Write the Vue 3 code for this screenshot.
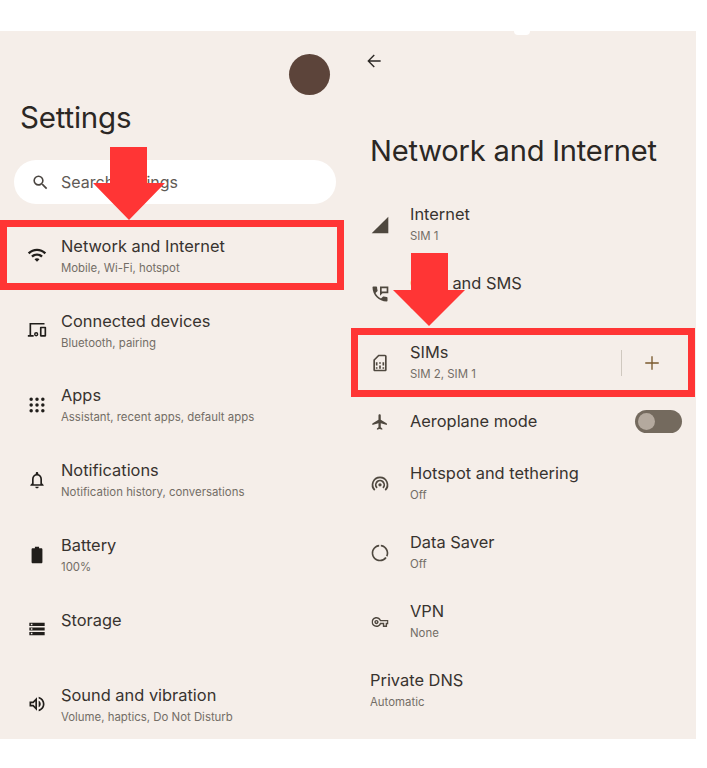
<script setup>
const dots = [5, 12, 19]
  .flatMap((y) => [5, 12, 19].map((x) => `M${x - 2.1} ${y}a2.1 2.1 0 1 0 4.2 0a2.1 2.1 0 1 0-4.2 0z`))
  .join('')

const icons = {
  wifi: 'M1 9l2 2c4.97-4.97 13.03-4.97 18 0l2-2C16.93 2.93 7.08 2.93 1 9zm8 8l3 3 3-3c-1.65-1.66-4.34-1.66-6 0zm-4-4l2 2c2.76-2.76 7.24-2.76 10 0l2-2C15.14 9.14 8.87 9.14 5 13z',
  devices: 'M3 3.5h18v2H5V18h3v2H1v-2h2zM16.5 8h5.5a1 1 0 0 1 1 1v10a1 1 0 0 1-1 1h-5.5a1 1 0 0 1-1-1V9a1 1 0 0 1 1-1zm1 2v8h3.500v-8zM11 14.500a2.600 2.600 0 1 1 0 5.200 2.600 2.600 0 0 1 0-5.200zm0 1.700a.9.9 0 1 0 0 1.800.9.9 0 0 0 0-1.800z',
  apps: dots,
  bell: 'M12 22c1.1 0 2-.9 2-2h-4c0 1.1.9 2 2 2zm6-6v-5c0-3.07-1.63-5.64-4.5-6.32V4c0-.83-.67-1.500-1.500-1.500s-1.500.67-1.500 1.500v.68C7.64 5.36 6 7.92 6 11v5l-2 2v1h16v-1l-2-2zm-2 1H8v-6c0-2.48 1.51-4.5 4-4.5s4 2.02 4 4.5v6z',
  battery: 'M17 4h-2.500V2h-5v2H7C6 4 5.500 4.600 5.500 5.500v15c0 .9.5 1.500 1.500 1.500h10c1 0 1.500-.6 1.500-1.500v-15C18.500 4.600 18 4 17 4z',
  storage: 'M2 20h20v-4H2v4zm2-3h2v2H4v-2zM2 4v4h20V4H2zm4 3H4V5h2v2zm-4 7h20v-4H2v4zm2-3h2v2H4v-2z',
  sound: 'M3 9v6h4l5 5V4L7 9H3zm7-.17v6.34L7.83 13H5v-2h2.83L10 8.83zM16.500 12c0-1.770-1.020-3.290-2.500-4.030v8.050c1.480-.73 2.500-2.250 2.500-4.020zM14 3.230v2.060c2.890.86 5 3.540 5 6.710s-2.110 5.850-5 6.710v2.060c4.010-.91 7-4.490 7-8.770 0-4.280-2.990-7.860-7-8.770z',
  signal: 'M2 22h20V2z',
  calls: 'M20 15.5c-1.25 0-2.45-.2-3.57-.57-.35-.11-.74-.03-1.02.24l-2.2 2.2c-2.83-1.44-5.15-3.75-6.59-6.59l2.2-2.21c.28-.26.36-.65.25-1C8.7 6.45 8.5 5.25 8.5 4c0-.55-.45-1-1-1H4c-.55 0-1 .45-1 1 0 9.39 7.61 17 17 17 .55 0 1-.45 1-1v-3.5c0-.55-.45-1-1-1zM12 3h10v8h-7l-3 3zm2 2v4h6V5z',
  sim: 'M18 2h-8L4 8v12c0 1.1.9 2 2 2h12c1.1 0 2-.9 2-2V4c0-1.1-.9-2-2-2zm0 18H6V8.83L10.83 4H18v16zM7 17h2v2H7zm8 0h2v2h-2zM7 11h2v4H7zm4 4h2v4h-2zm0-4h2v2h-2zm4 0h2v4h-2z',
  plane: 'M21 16v-2l-8-5V3.5c0-.83-.67-1.5-1.5-1.5S10 2.67 10 3.5V9l-8 5v2l8-2.5V19l-2 1.5V22l3.5-1 3.5 1v-1.5L13 19v-5.500l8 2.500z',
  hotspot: 'M12 11a2 2 0 1 0 0 4 2 2 0 0 0 0-4zM12 7a6 6 0 0 0-4.200 10.300l1.400-1.400a4 4 0 1 1 5.600 0l1.400 1.400A6 6 0 0 0 12 7zM12 3A10 10 0 0 0 5 20.100l1.400-1.400a8 8 0 1 1 11.200 0l1.400 1.400A10 10 0 0 0 12 3z',
  saver: 'M13 2.050v2.020c3.950.49 7 3.850 7 7.930 0 1.200-.27 2.330-.74 3.350l1.730 1A9.960 9.960 0 0 0 22 12c0-5.180-3.950-9.450-9-9.950zM12 20a7.990 7.990 0 0 1-1-15.930V2.050C5.950 2.550 2 6.820 2 12c0 5.520 4.480 10 10 10 3.300 0 6.230-1.610 8.050-4.090l-1.730-1A7.980 7.980 0 0 1 12 20z',
  key: 'M22 19h-6v-4h-2.680c-1.140 2.420-3.600 4-6.320 4-3.860 0-7-3.140-7-7s3.140-7 7-7c2.720 0 5.170 1.580 6.320 4H24v6h-2v4zm-4-2h2v-4h2v-2H11.940l-.23-.67C11.010 8.340 9.110 7 7 7c-2.760 0-5 2.240-5 5s2.240 5 5 5c2.110 0 4.010-1.340 4.710-3.330l.23-.67H18v4zM7 15c-1.650 0-3-1.350-3-3s1.350-3 3-3 3 1.350 3 3-1.350 3-3 3zm0-4c-.55 0-1 .45-1 1s.45 1 1 1 1-.45 1-1-.45-1-1-1z',
  search: 'M15.500 14h-.79l-.28-.27A6.470 6.470 0 0 0 16 9.500 6.500 6.500 0 1 0 9.500 16c1.610 0 3.090-.59 4.230-1.570l.27.28v.79l5 4.990L20.490 19l-4.990-5zm-6 0C7.010 14 5 11.990 5 9.500S7.010 5 9.500 5 14 7.010 14 9.500 11.990 14 9.500 14z',
  back: 'M20 11.100H7.200l5.700-5.700L11.700 4.200 4 12l7.700 7.800 1.200-1.200-5.700-5.700H20z',
  plus: 'M11.100 3h1.800v8.100H21v1.800h-8.100V21h-1.800v-8.100H3v-1.800h8.100z'
}

const settings = [
  { icon: 'wifi', title: 'Network and Internet', sub: 'Mobile, Wi-Fi, hotspot' },
  { icon: 'devices', title: 'Connected devices', sub: 'Bluetooth, pairing' },
  { icon: 'apps', title: 'Apps', sub: 'Assistant, recent apps, default apps' },
  { icon: 'bell', title: 'Notifications', sub: 'Notification history, conversations' },
  { icon: 'battery', title: 'Battery', sub: '100%' },
  { icon: 'storage', title: 'Storage', sub: '\u00a0' },
  { icon: 'sound', title: 'Sound and vibration', sub: 'Volume, haptics, Do Not Disturb' }
]

const network = [
  { icon: 'signal', title: 'Internet', sub: 'SIM 1' },
  { icon: 'calls', title: 'Calls and SMS', sub: 'SIM 1' },
  { icon: 'sim', title: 'SIMs', sub: 'SIM 2, SIM 1', add: true },
  { icon: 'plane', title: 'Aeroplane mode', toggle: true },
  { icon: 'hotspot', title: 'Hotspot and tethering', sub: 'Off' },
  { icon: 'saver', title: 'Data Saver', sub: 'Off' },
  { icon: 'key', title: 'VPN', sub: 'None' },
  { title: 'Private DNS', sub: 'Automatic' }
]
</script>

<template>
  <div class="page">
    <div class="screens">
      <section class="panel left">
        <div class="avatar-row"><div class="avatar"></div></div>
        <h1 class="settings-title">Settings</h1>
        <div class="search">
          <svg class="search-icon" viewBox="0 0 24 24"><path :d="icons.search" /></svg>
          <span>Search settings</span>
        </div>
        <div class="row left-row" v-for="item in settings" :key="item.title">
          <svg class="icon" :class="'i-' + item.icon" viewBox="0 0 24 24"><path :d="icons[item.icon]" /></svg>
          <div class="text">
            <div class="title">{{ item.title }}</div>
            <div class="sub">{{ item.sub }}</div>
          </div>
        </div>
      </section>

      <section class="panel right">
        <div class="notch"></div>
        <svg class="back" viewBox="0 0 24 24"><path :d="icons.back" /></svg>
        <h1 class="net-title">Network and Internet</h1>
        <div
          class="row right-row"
          :class="{ short: item.toggle, plain: !item.icon }"
          v-for="item in network"
          :key="item.title"
        >
          <svg v-if="item.icon" class="icon brown" :class="'i-' + item.icon" viewBox="0 0 24 24"><path :d="icons[item.icon]" /></svg>
          <div class="text">
            <div class="title">{{ item.title }}</div>
            <div class="sub" v-if="item.sub">{{ item.sub }}</div>
          </div>
          <div class="add" v-if="item.add">
            <svg class="plus" viewBox="0 0 24 24"><path :d="icons.plus" /></svg>
          </div>
          <div class="toggle" v-if="item.toggle"><div class="knob"></div></div>
        </div>
      </section>
    </div>

    <div class="red-box box-a"></div>
    <div class="red-box box-b"></div>
    <svg class="arrow arrow-a" viewBox="0 0 72 73"><path d="M17 0h37v36h18L36 73 0 36h17z" /></svg>
    <svg class="arrow arrow-b" viewBox="0 0 72 73"><path d="M18 0h37v37h17L36 73 0 37h18z" /></svg>
  </div>
</template>

<style scoped>
.page {
  position: relative;
  width: 707px;
  height: 768px;
  background: #fff;
  font-family: Inter, "Liberation Sans", sans-serif;
  overflow: hidden;
}
.screens {
  display: flex;
  width: 696px;
  padding-top: 31px;
}
.panel {
  height: 708px;
  background: #f5eee9;
  box-sizing: border-box;
}
.left {
  width: 340px;
  flex: none;
}
.right {
  position: relative;
  flex: 1;
}
.avatar-row {
  display: flex;
  justify-content: flex-end;
  padding: 23px 10px 0 0;
}
.avatar {
  width: 41px;
  height: 41px;
  border-radius: 50%;
  background: #5c443a;
}
h1 {
  margin: 0;
  font-weight: 400;
  color: #2b2724;
}
.settings-title {
  margin: 4px 0 0 20px;
  font-size: 29.5px;
  line-height: 36px;
  letter-spacing: -0.2px;
}
.search {
  display: flex;
  align-items: center;
  width: 322px;
  height: 44px;
  margin: 25px 0 14px 14px;
  background: #fff;
  border-radius: 22px;
  color: #5f5a55;
  font-size: 16px;
}
.search-icon {
  width: 19px;
  height: 19px;
  margin: 0 11px 0 17px;
  fill: #4a4540;
}
.row {
  display: flex;
  align-items: center;
  box-sizing: border-box;
}
.left-row {
  height: 74.8px;
}
.left-row .text {
  padding-top: 2px;
}
.icon {
  flex: none;
  width: 20px;
  height: 20px;
  fill: #211e1b;
}
.i-key {
  transform: scale(0.85);
}
.i-storage {
  transform: scale(0.92);
}
.i-plane {
  transform: scale(0.92);
}
.left-row .icon {
  margin: 0 14px 0 27px;
}
.right-row {
  height: 69px;
}
.right-row .icon {
  margin: 0 20px 0 30px;
}
.right-row.plain {
  padding-left: 30px;
}
.right-row.short {
  height: 52px;
  padding: 0 14px 3px 0;
}
.icon.brown {
  fill: #4f483f;
}
.text {
  flex: 1;
  min-width: 0;
}
.title {
  font-size: 16.4px;
  line-height: 21px;
  color: #38332f;
}
.sub {
  margin-top: 2px;
  font-size: 11.4px;
  line-height: 18px;
  color: #736d66;
}
.notch {
  position: absolute;
  left: 174px;
  top: 0;
  width: 16px;
  height: 4px;
  background: #fff;
  border-radius: 0 0 8px 8px;
}
.back {
  display: block;
  width: 20px;
  height: 20px;
  margin: 20px 0 0 23.5px;
  fill: #2b2724;
}
.net-title {
  margin: 61px 0 0 30px;
  font-size: 29.1px;
  line-height: 38px;
  letter-spacing: -0.2px;
  height: 58px;
}
.add {
  display: flex;
  align-items: center;
  justify-content: center;
  width: 61px;
  height: 26px;
  margin-right: 14px;
  border-left: 1px solid #cfc8bf;
  box-sizing: border-box;
}
.plus {
  width: 18px;
  height: 18px;
  fill: #7a5a2e;
}
.toggle {
  display: flex;
  align-items: center;
  width: 47px;
  height: 23px;
  border-radius: 12px;
  background: #746a5e;
}
.knob {
  width: 17px;
  height: 17px;
  margin-left: 3px;
  border-radius: 50%;
  background: #b4a99e;
}
.red-box {
  position: absolute;
  box-sizing: border-box;
  border: 7px solid #ff3535;
}
.box-a {
  left: 0;
  top: 220px;
  width: 344px;
  height: 70px;
}
.box-b {
  left: 351px;
  top: 328px;
  width: 344px;
  height: 69px;
}
.arrow {
  position: absolute;
  width: 72px;
  height: 73px;
  fill: #ff3535;
}
.arrow-a {
  left: 93px;
  top: 147px;
}
.arrow-b {
  left: 393px;
  top: 253px;
}
</style>
